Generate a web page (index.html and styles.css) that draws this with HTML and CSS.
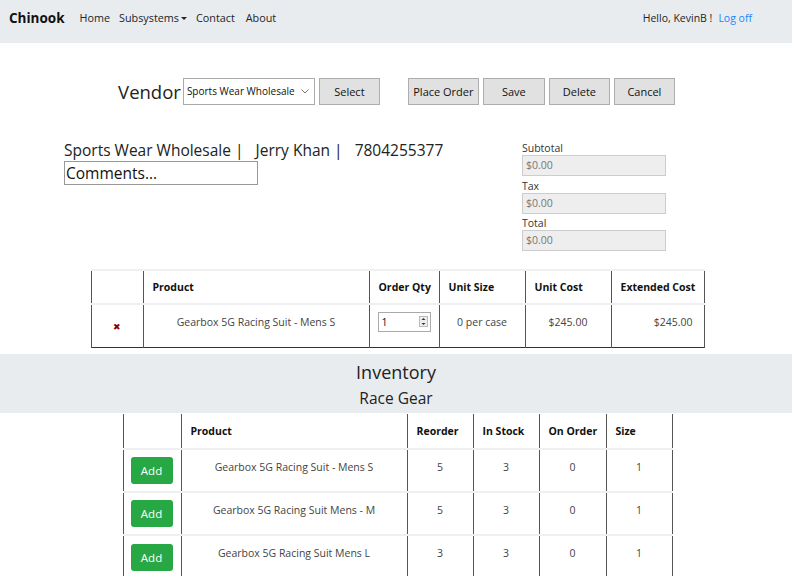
FILE: index.html
```html
<!DOCTYPE html>
<html>
<head>
<meta charset="utf-8">
<link rel="stylesheet" href="styles.css">
</head>
<body>
<nav class="navbar">
  <div class="nav-left">
    <span class="brand">Chinook</span>
    <a class="nav-link">Home</a>
    <a class="nav-link">Subsystems<span class="caret"></span></a>
    <a class="nav-link">Contact</a>
    <a class="nav-link">About</a>
  </div>
  <div class="nav-right">
    <span class="hello">Hello, KevinB !</span>
    <a class="logoff">Log off</a>
  </div>
</nav>

<main class="content">
<div class="vendor-row">
  <div class="vendor-group">
    <span class="vendor-label">Vendor</span>
    <div class="select">Sports Wear Wholesale<svg class="chev" width="8" height="5" viewBox="0 0 8 5"><path d="M0.5 0.5 L4 4 L7.5 0.5" fill="none" stroke="#777" stroke-width="1"/></svg></div>
    <button class="btn btn-select">Select</button>
  </div>
  <div class="action-group">
    <button class="btn btn-place">Place Order</button>
    <button class="btn btn-save">Save</button>
    <button class="btn btn-delete">Delete</button>
    <button class="btn btn-cancel">Cancel</button>
  </div>
</div>

<div class="info">
  <div class="info-left">
    <div class="vendor-info">Sports Wear Wholesale |&nbsp;&nbsp; Jerry Khan |&nbsp;&nbsp; 7804255377</div>
    <div class="comments">Comments...</div>
  </div>
  <div class="totals">
    <div class="tot-label">Subtotal</div>
    <div class="tot-input">$0.00</div>
    <div class="tot-label">Tax</div>
    <div class="tot-input">$0.00</div>
    <div class="tot-label">Total</div>
    <div class="tot-input">$0.00</div>
  </div>
</div>

<table class="order-table">
  <colgroup>
    <col class="oc1"><col class="oc2"><col class="oc3"><col class="oc4"><col class="oc5"><col class="oc6">
  </colgroup>
  <thead>
    <tr><th></th><th>Product</th><th>Order Qty</th><th>Unit Size</th><th>Unit Cost</th><th>Extended Cost</th></tr>
  </thead>
  <tbody>
    <tr>
      <td class="center"><span class="remove">✖</span></td>
      <td class="center txt">Gearbox 5G Racing Suit - Mens S</td>
      <td class="txt"><div class="qty"><span class="qty-val">1</span><span class="spin"><svg width="9" height="11" viewBox="0 0 9 11"><rect x="0.5" y="0.5" width="8" height="10" fill="#eee" stroke="#bbb"/><path d="M2.5 4 L4.5 2 L6.5 4Z M2.5 7 L4.5 9 L6.5 7Z" fill="#333"/></svg></span></div></td>
      <td class="center txt">0 per case</td>
      <td class="center txt">$245.00</td>
      <td class="right txt">$245.00</td>
    </tr>
  </tbody>
</table>
</main>

<section class="inventory-band">
  <div class="inv-title">Inventory</div>
  <div class="inv-sub">Race Gear</div>
</section>

<main class="content">
<table class="inv-table">
  <colgroup>
    <col class="ic1"><col class="ic2"><col class="ic3"><col class="ic4"><col class="ic5"><col class="ic6">
  </colgroup>
  <thead>
    <tr><th></th><th>Product</th><th>Reorder</th><th>In Stock</th><th>On Order</th><th>Size</th></tr>
  </thead>
  <tbody>
    <tr><td><button class="add">Add</button></td><td class="center txt">Gearbox 5G Racing Suit - Mens S</td><td class="center txt">5</td><td class="center txt">3</td><td class="center txt">0</td><td class="center txt">1</td></tr>
    <tr><td><button class="add">Add</button></td><td class="center txt">Gearbox 5G Racing Suit Mens - M</td><td class="center txt">5</td><td class="center txt">3</td><td class="center txt">0</td><td class="center txt">1</td></tr>
    <tr><td><button class="add">Add</button></td><td class="center txt">Gearbox 5G Racing Suit Mens L</td><td class="center txt">3</td><td class="center txt">3</td><td class="center txt">0</td><td class="center txt">1</td></tr>
  </tbody>
</table>
</main>
</body>
</html>
```

FILE: styles.css
```css
* { box-sizing: border-box; }
body {
  margin: 0;
  font-family: "Open Sans", "Noto Sans", sans-serif;
  color: #212529;
  background: #fff;
  font-size: 11px;
}
.navbar {
  height: 43px;
  background: #e9ecef;
  display: flex;
  align-items: center;
  justify-content: space-between;
  padding: 0 40px 8px 9px;
}
.nav-left { display: flex; align-items: center; }
.brand { font-weight: 700; font-size: 13.5px; margin-right: 15px; color: #111; }
.nav-link { font-size: 10.8px; color: #212529; margin-right: 9px; }
.nav-link:nth-child(4) { margin-right: 11px; }
.caret {
  display: inline-block; width: 0; height: 0; margin-left: 2px; vertical-align: 2px;
  border-left: 3px solid transparent; border-right: 3px solid transparent; border-top: 3px solid #212529;
}
.nav-right { display: flex; align-items: center; font-size: 10.5px; }
.hello { margin-right: 6px; }
.logoff { color: #1a85ff; }

.content { padding-left: 3px; }

.vendor-row {
  display: flex;
  justify-content: center;
  gap: 28px;
  margin-top: 34px;
  height: 28px;
  padding-right: 2px;
}
.vendor-group { display: flex; align-items: center; }
.vendor-label { font-size: 18.5px; margin-right: 2px; color: #222; }
.select {
  width: 132px; height: 27px; border: 1px solid #aaa; background: #fff;
  display: flex; align-items: center; justify-content: space-between;
  padding: 0 5px 0 3px; font-size: 10px; margin-right: 4px; color: #111;
}
.btn {
  height: 27px; background: #e1e1e1; border: 1px solid #adadad;
  font-family: inherit; font-size: 11px; color: #111; padding: 0;
}
.btn-select { width: 61px; }
.action-group { display: flex; gap: 4px; align-items: center; }
.btn-place { width: 71px; }
.btn-save { width: 62px; }
.btn-delete { width: 61px; }
.btn-cancel { width: 61px; }

.info {
  display: flex;
  margin-top: 37px;
  padding-left: 61px;
}
.info-left { width: 458px; }
.vendor-info { font-size: 15.5px; color: #222; line-height: 22px; margin-top: -3px; }
.comments {
  width: 194px; height: 24px; border: 1px solid #999; font-size: 15.5px;
  line-height: 22px; padding-left: 1px; color: #111;
}
.totals { width: 144px; margin-top: -1px; }
.tot-label { font-size: 10.5px; line-height: 14px; height: 14px; color: #333; }
.tot-input {
  height: 21px; background: #eee; border: 1px solid #ccc; font-size: 10.5px; color: #777;
  padding-left: 3px; line-height: 19px; margin-bottom: 2.5px;
}

table { border-collapse: collapse; margin: 0 auto; }
th { text-align: left; font-weight: 700; font-size: 10.5px; color: #111; padding: 0 0 0 9px; }
td { font-size: 10.5px; color: #444; padding: 0; }
td.txt { padding-bottom: 8px; }
.center { text-align: center; }
td.right { text-align: right; padding-right: 11px; }

.order-table { margin-top: 15px; border-bottom: 1px solid #333; }
.order-table thead tr { height: 34px; border-top: 2px solid #eef0f2; }
.order-table tbody tr { height: 44px; border-top: 2px solid #eef0f2; }
.order-table th, .order-table td { border-left: 1px solid #555; border-right: 1px solid #555; }
.oc1 { width: 52px; } .oc2 { width: 226px; } .oc3 { width: 70px; }
.oc4 { width: 86px; } .oc5 { width: 86px; } .oc6 { width: 93px; }
.remove { color: #8b0000; font-size: 9px; }
.qty {
  width: 53px; height: 20px; border: 1px solid #aaa; margin-left: 8px;
  display: flex; align-items: center; justify-content: space-between; padding: 0 2px 0 3px;
  color: #111; font-size: 10.5px;
}
.spin { display: flex; }

.inventory-band {
  background: #e9ecef;
  margin-top: 6px;
  height: 59px;
  text-align: center;
  padding-top: 6px;
}
.inv-title { font-size: 18px; line-height: 24px; color: #222; }
.inv-sub { font-size: 15.5px; line-height: 22px; color: #222; margin-top: 3px; }

.inv-table { margin-top: 1px; }
.inv-table thead tr { height: 35px; }
.inv-table tbody tr { height: 43px; border-top: 2px solid #eef0f2; }
.inv-table th, .inv-table td { border-left: 1px solid #555; border-right: 1px solid #555; }
.ic1 { width: 58px; } .ic2 { width: 226px; } .ic3 { width: 66px; }
.ic4 { width: 66px; } .ic5 { width: 67px; } .ic6 { width: 66px; }
.add {
  background: #28a745; color: #fff; border: none; border-radius: 3px;
  width: 42px; height: 27px; font-family: inherit; font-size: 11.5px; margin-left: 7px; padding: 0;
}
```
